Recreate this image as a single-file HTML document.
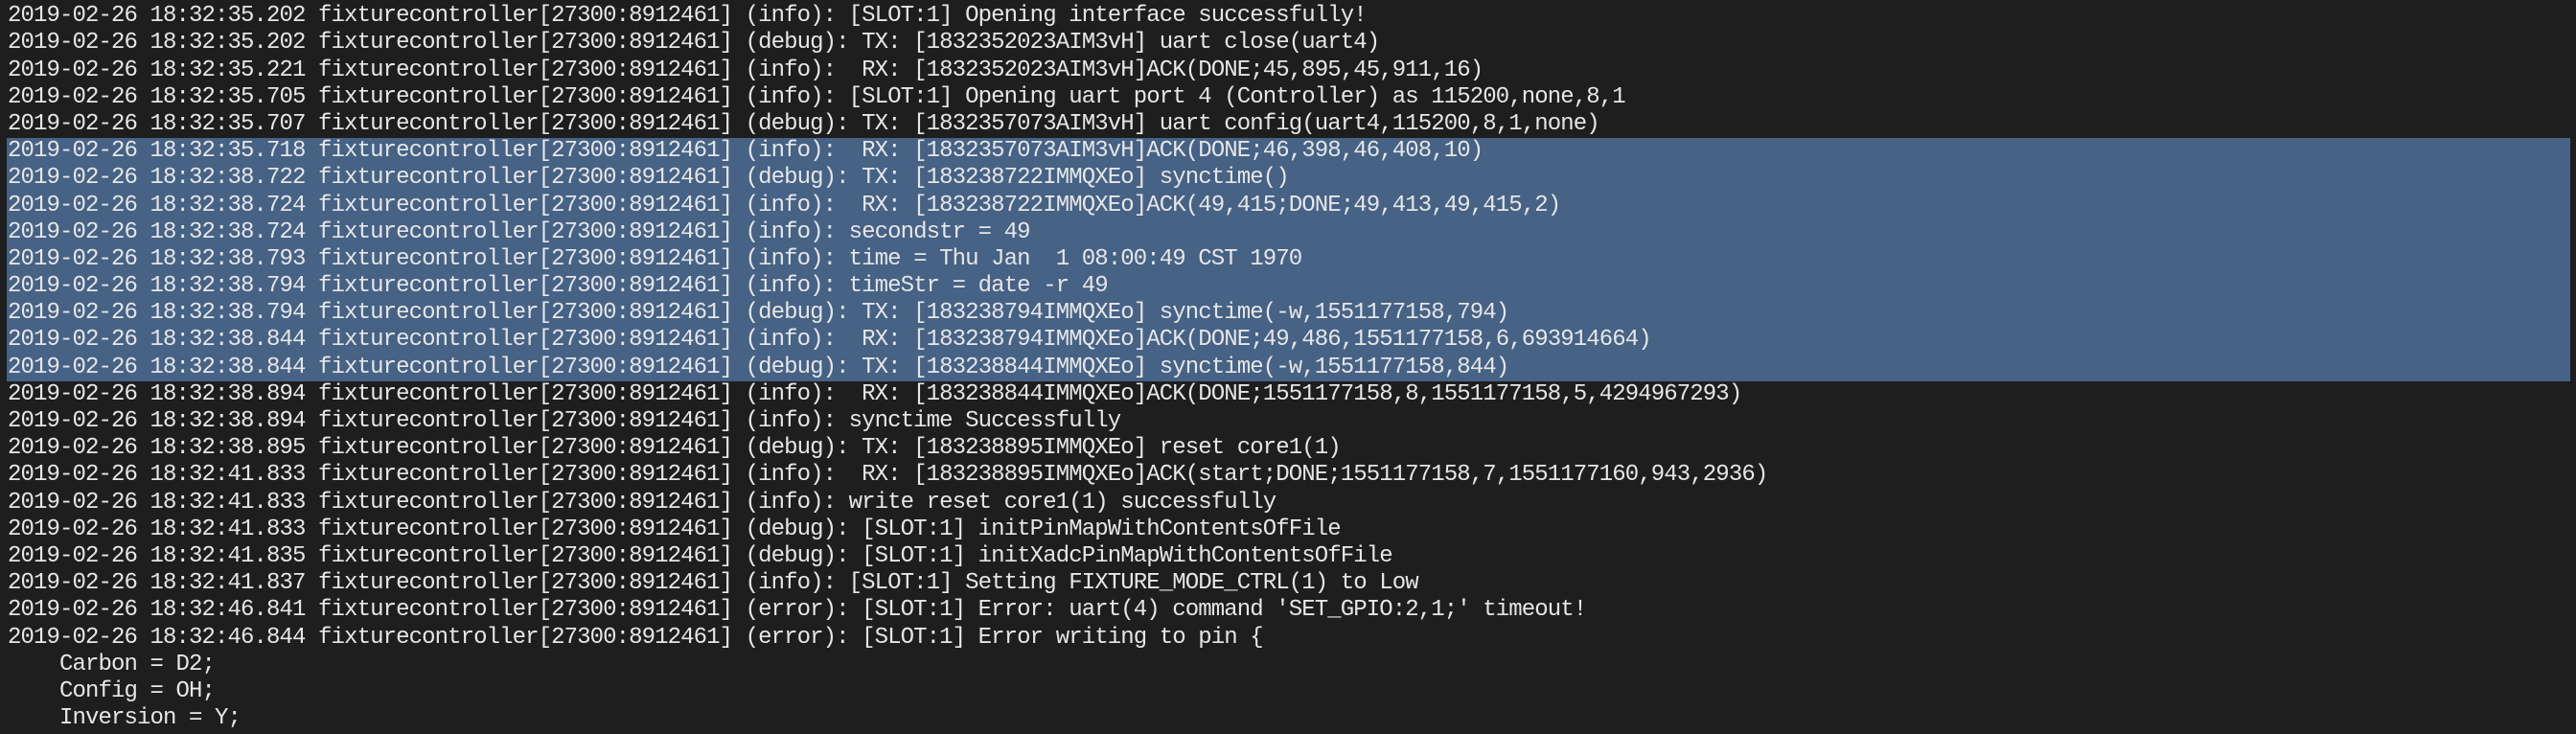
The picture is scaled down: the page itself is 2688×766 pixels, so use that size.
<!DOCTYPE html>
<html><head><meta charset="utf-8"><style>
html,body{margin:0;padding:0;background:#1e1e1e;width:2688px;height:766px;overflow:hidden;}
#c{position:absolute;left:0;top:-25px;width:2688px;}
.l{height:28.2px;line-height:28.2px;white-space:pre;font-family:"Liberation Mono",monospace;font-size:24px;letter-spacing:-0.9px;color:#e6e6e6;padding-left:8px;}
.h{background:#466285;margin-left:7px;padding-left:1px;width:2674px;}
</style></head><body><div id="c">
<div class="l">2019-02-26 18:32:35.201 fixturecontroller[27300:8912461] (info): [SLOT:1] Opening interface</div>
<div class="l">2019-02-26 18:32:35.202 fixturecontroller[27300:8912461] (info): [SLOT:1] Opening interface successfully!</div>
<div class="l">2019-02-26 18:32:35.202 fixturecontroller[27300:8912461] (debug): TX: [1832352023AIM3vH] uart close(uart4)</div>
<div class="l">2019-02-26 18:32:35.221 fixturecontroller[27300:8912461] (info):  RX: [1832352023AIM3vH]ACK(DONE;45,895,45,911,16)</div>
<div class="l">2019-02-26 18:32:35.705 fixturecontroller[27300:8912461] (info): [SLOT:1] Opening uart port 4 (Controller) as 115200,none,8,1</div>
<div class="l">2019-02-26 18:32:35.707 fixturecontroller[27300:8912461] (debug): TX: [1832357073AIM3vH] uart config(uart4,115200,8,1,none)</div>
<div class="l h">2019-02-26 18:32:35.718 fixturecontroller[27300:8912461] (info):  RX: [1832357073AIM3vH]ACK(DONE;46,398,46,408,10)</div>
<div class="l h">2019-02-26 18:32:38.722 fixturecontroller[27300:8912461] (debug): TX: [183238722IMMQXEo] synctime()</div>
<div class="l h">2019-02-26 18:32:38.724 fixturecontroller[27300:8912461] (info):  RX: [183238722IMMQXEo]ACK(49,415;DONE;49,413,49,415,2)</div>
<div class="l h">2019-02-26 18:32:38.724 fixturecontroller[27300:8912461] (info): secondstr = 49</div>
<div class="l h">2019-02-26 18:32:38.793 fixturecontroller[27300:8912461] (info): time = Thu Jan  1 08:00:49 CST 1970</div>
<div class="l h">2019-02-26 18:32:38.794 fixturecontroller[27300:8912461] (info): timeStr = date -r 49</div>
<div class="l h">2019-02-26 18:32:38.794 fixturecontroller[27300:8912461] (debug): TX: [183238794IMMQXEo] synctime(-w,1551177158,794)</div>
<div class="l h">2019-02-26 18:32:38.844 fixturecontroller[27300:8912461] (info):  RX: [183238794IMMQXEo]ACK(DONE;49,486,1551177158,6,693914664)</div>
<div class="l h">2019-02-26 18:32:38.844 fixturecontroller[27300:8912461] (debug): TX: [183238844IMMQXEo] synctime(-w,1551177158,844)</div>
<div class="l">2019-02-26 18:32:38.894 fixturecontroller[27300:8912461] (info):  RX: [183238844IMMQXEo]ACK(DONE;1551177158,8,1551177158,5,4294967293)</div>
<div class="l">2019-02-26 18:32:38.894 fixturecontroller[27300:8912461] (info): synctime Successfully</div>
<div class="l">2019-02-26 18:32:38.895 fixturecontroller[27300:8912461] (debug): TX: [183238895IMMQXEo] reset core1(1)</div>
<div class="l">2019-02-26 18:32:41.833 fixturecontroller[27300:8912461] (info):  RX: [183238895IMMQXEo]ACK(start;DONE;1551177158,7,1551177160,943,2936)</div>
<div class="l">2019-02-26 18:32:41.833 fixturecontroller[27300:8912461] (info): write reset core1(1) successfully</div>
<div class="l">2019-02-26 18:32:41.833 fixturecontroller[27300:8912461] (debug): [SLOT:1] initPinMapWithContentsOfFile</div>
<div class="l">2019-02-26 18:32:41.835 fixturecontroller[27300:8912461] (debug): [SLOT:1] initXadcPinMapWithContentsOfFile</div>
<div class="l">2019-02-26 18:32:41.837 fixturecontroller[27300:8912461] (info): [SLOT:1] Setting FIXTURE_MODE_CTRL(1) to Low</div>
<div class="l">2019-02-26 18:32:46.841 fixturecontroller[27300:8912461] (error): [SLOT:1] Error: uart(4) command 'SET_GPIO:2,1;' timeout!</div>
<div class="l">2019-02-26 18:32:46.844 fixturecontroller[27300:8912461] (error): [SLOT:1] Error writing to pin {</div>
<div class="l">    Carbon = D2;</div>
<div class="l">    Config = OH;</div>
<div class="l">    Inversion = Y;</div>
</div></body></html>
